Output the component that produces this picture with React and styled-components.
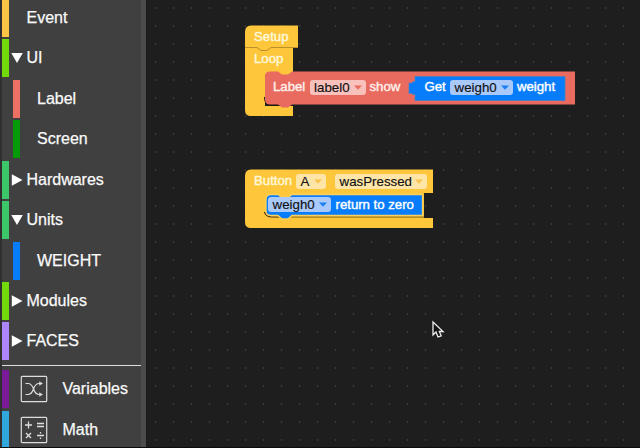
import React from "react";
import styled, { createGlobalStyle } from "styled-components";

const Global = createGlobalStyle`
  *{box-sizing:border-box}
  body{margin:0;background:#1e1e1e;overflow:hidden;font-family:"Liberation Sans",Arial,sans-serif}
`;
const Page = styled.div`
  display:flex;width:640px;height:448px;overflow:hidden;border-bottom:1px solid #0c0c0c;
`;
const Toolbox = styled.nav`
  flex:none;width:146px;height:448px;background:#404040;overflow:hidden;
  border-left:2px solid #303030;border-right:5px solid #4c4c4c;
`;
const Tree = styled.div`
  display:flex;flex-direction:column;gap:2.47px;margin-top:-1.3px;
`;
const Item = styled.div`
  flex:none;display:flex;align-items:center;height:38px;padding-left:${p => (p.$nested ? 10.5 : 0)}px;
  color:#fafafa;font-size:16px;-webkit-text-stroke:.25px #fafafa;
`;
const Stripe = styled.span`flex:none;width:7.3px;height:38px;background:${p => p.$color};`;
const Slot = styled.span`
  flex:none;display:flex;align-items:center;
  width:${p => p.$w}px;height:28px;padding-left:${p => p.$in || 0}px;
`;
const Name = styled.span`white-space:nowrap;line-height:20px;`;
const Divider = styled.hr`flex:none;width:140px;height:1px;border:0;margin:1.7px 0 2px;background:#ddd;`;
const Canvas = styled.main`
  position:relative;flex:1;height:448px;
  background:radial-gradient(circle at 9.5px 8px,#3b3b3b 0 .7px,transparent 1.2px) 0 0/18px 18px,#1e1e1e;
  box-shadow:inset 1px 0 #1a1a1a;
`;
const Stack = styled.section`
  position:absolute;left:99px;top:${p => p.$y}px;width:${p => p.$w}px;height:${p => p.$h}px;
`;
const Shape = styled.svg`position:absolute;left:0;top:0;overflow:visible;`;
const Line = styled.div`
  position:relative;display:flex;align-items:center;height:${p => p.$h}px;
  padding-left:${p => p.$in}px;
`;
const Word = styled.span`
  flex:none;width:${p => p.$w}px;color:${p => p.$c || "#fff"};font-size:13.2px;line-height:16px;
  white-space:nowrap;-webkit-text-stroke:.4px ${p => p.$c || "#fff"};
`;
const Field = styled.span`
  flex:none;display:flex;align-items:center;justify-content:space-between;
  width:${p => p.$w}px;height:15px;margin-right:${p => p.$mr || 0}px;padding:0 4px 0 4.6px;
  border-radius:3px;background:${p => p.$bg};color:#111;font-size:13.3px;line-height:15px;white-space:nowrap;
  -webkit-text-stroke:.15px #111;
`;
const Cursor = styled.svg`position:absolute;left:286px;top:320px;`;

const Arrow = ({ open }) => (
  <svg width="12" height="12" viewBox="0 0 12 12" fill="#fff">
    <path d={open ? "M.3 1h11.500L6 11z" : "M.8 .3v11.400L11.500 6z"} />
  </svg>
);
const Dropdown = ({ text, w, bg, arrow, mr }) => (
  <Field $w={w} $bg={bg} $mr={mr}>
    {text}
    <svg width="8" height="5" viewBox="0 0 8 5"><path d="M0 .5h8L4 4.8z" fill={arrow} /></svg>
  </Field>
);
const Shuffle = () => (
  <svg width="28" height="28" viewBox="0 0 28 28" fill="none" stroke="#ddd" strokeWidth="1.2">
    <rect x="1.3" y="1.3" width="25.4" height="25.4" rx="1" />
    <path d="M5.500 8.500h2.500c7 0 4 11 11 11h3M5.500 19.500h2.500c7 0 4-11 11-11h3" />
    <path d="M19.500 6.700l3 1.800-3 1.800zM19.500 17.700l3 1.800-3 1.800z" fill="#ddd" strokeWidth=".5" />
  </svg>
);
const MathIcon = () => (
  <svg width="28" height="28" viewBox="0 0 28 28" fill="none" stroke="#ddd" strokeWidth="1.3">
    <rect x="1.3" y="1.3" width="25.4" height="25.4" rx="1" strokeWidth="1.2" />
    <path d="M5 9h7M8.500 5.500v7M17 7.500h7M17 10.500h7M6 17l5 5M11 17l-5 5M17 19.500h7" />
    <path d="M20.500 16v1.500M20.500 21.500v1.500" />
  </svg>
);

const categories = [
  ["Event", "#ffc445"],
  ["UI", "#72d90b", "open"],
  ["Label", "#ee7063", "", true],
  ["Screen", "#069a0b", "", true],
  ["Hardwares", "#3cc768", "closed"],
  ["Units", "#3cc768", "open"],
  ["WEIGHT", "#087dfb", "", true],
  ["Modules", "#72d90b", "closed"],
  ["FACES", "#ae86fb", "closed"],
];

export default function App() {
  return (
    <Page>
      <Global />
      <Toolbox>
        <Tree>
          {categories.map(([name, color, state, nested]) => (
            <Item key={name} $nested={nested}>
              <Stripe $color={color} />
              <Slot $w={17.2} $in={1.4}>{state ? <Arrow open={state === "open"} /> : null}</Slot>
              <Name>{name}</Name>
            </Item>
          ))}
          <Divider />
          <Item><Stripe $color="#7b1a99" /><Slot $w={53.2} $in={11}><Shuffle /></Slot><Name>Variables</Name></Item>
          <Item><Stripe $color="#30a8de" /><Slot $w={53.2} $in={11}><MathIcon /></Slot><Name>Math</Name></Item>
        </Tree>
      </Toolbox>
      <Canvas>
        <Stack $y={25} $w={330} $h={92}>
          <Shape width="330" height="92">
            <path d="M0 7Q0 .5 6 .5H53V23H48V50H20V81H48V91H6Q0 91 0 85Z" fill="#fec63b" />
            <path d="M0 22.500H12l4 3h6l4-3H53" fill="none" stroke="#a98328" strokeWidth=".8" />
            <path d="M19 72q0 8.500 7 8.500h13V72Z" fill="#17130a" />
            <path d="M20 51q0-4.500 5-4.500h8l4 3h6l4-3H330V79.500H47l-4 3h-6L33 79.500h-8q-5 0-5-5Z" fill="#e96b60" />
            <path d="M170 51.500H320V75.500H170V69q-1 2-3-.5h-3V58h3q2-3 3-1Z" fill="#087dfb" stroke="#4c80bd" strokeWidth=".8" />
          </Shape>
          <Line $h={23} $in={9}><Word $c="#fff9dc">Setup</Word></Line>
          <Line $h={22} $in={9}><Word $c="#fff9dc">Loop</Word></Line>
          <Line $h={34} $in={28}>
            <Word $w={36.5} $c="#fff0eb">Label</Word>
            <Dropdown text="label0" w={56} bg="#f8c1bb" arrow="#e96b60" mr={4} />
            <Word $w={55} $c="#fff0eb">show</Word>
            <Word $w={25.5}>Get</Word>
            <Dropdown text="weigh0" w={63} bg="#a9c9fb" arrow="#1b7ff0" mr={4} />
            <Word>weight</Word>
          </Line>
        </Stack>
        <Stack $y={169} $w={188} $h={59}>
          <Shape width="188" height="59">
            <path d="M0 7Q0 .5 6 .5H188V24H179V49H188V59H6Q0 59 0 53Z" fill="#fec63b" />
            <path d="M19.500 43q1 5 8 5h10" fill="none" stroke="#30240b" strokeWidth="1.2" />
            <path d="M45 48H179" fill="none" stroke="#514014" strokeWidth=".8" />
            <path d="M21 30q0-4.500 5-4.500h7l4 3h6l4-3H177.500V46.500H47l-4 3.500h-6l-4-3.500h-7q-5 0-5-4.500Z" fill="#087dfb" stroke="#ffd15c" strokeWidth="1.3" />
          </Shape>
          <Line $h={24} $in={9}>
            <Word $w={42} $c="#fff9dc">Button</Word>
            <Dropdown text="A" w={30} bg="#ffe5a8" arrow="#f8c44d" mr={9} />
            <Dropdown text="wasPressed" w={92} bg="#ffe5a8" arrow="#f8c44d" />
          </Line>
          <Line $h={23} $in={23}>
            <Dropdown text="weigh0" w={63} bg="#a9c9fb" arrow="#1b7ff0" mr={4.5} />
            <Word>return to zero</Word>
          </Line>
        </Stack>
        <Cursor width="14" height="20" viewBox="0 0 14 20">
          <path d="M1 2v13l3-3 2 5 3.200-1.200L7.300 11.500H11Z" fill="#111" stroke="#eee" strokeWidth="1.3" />
        </Cursor>
      </Canvas>
    </Page>
  );
}
